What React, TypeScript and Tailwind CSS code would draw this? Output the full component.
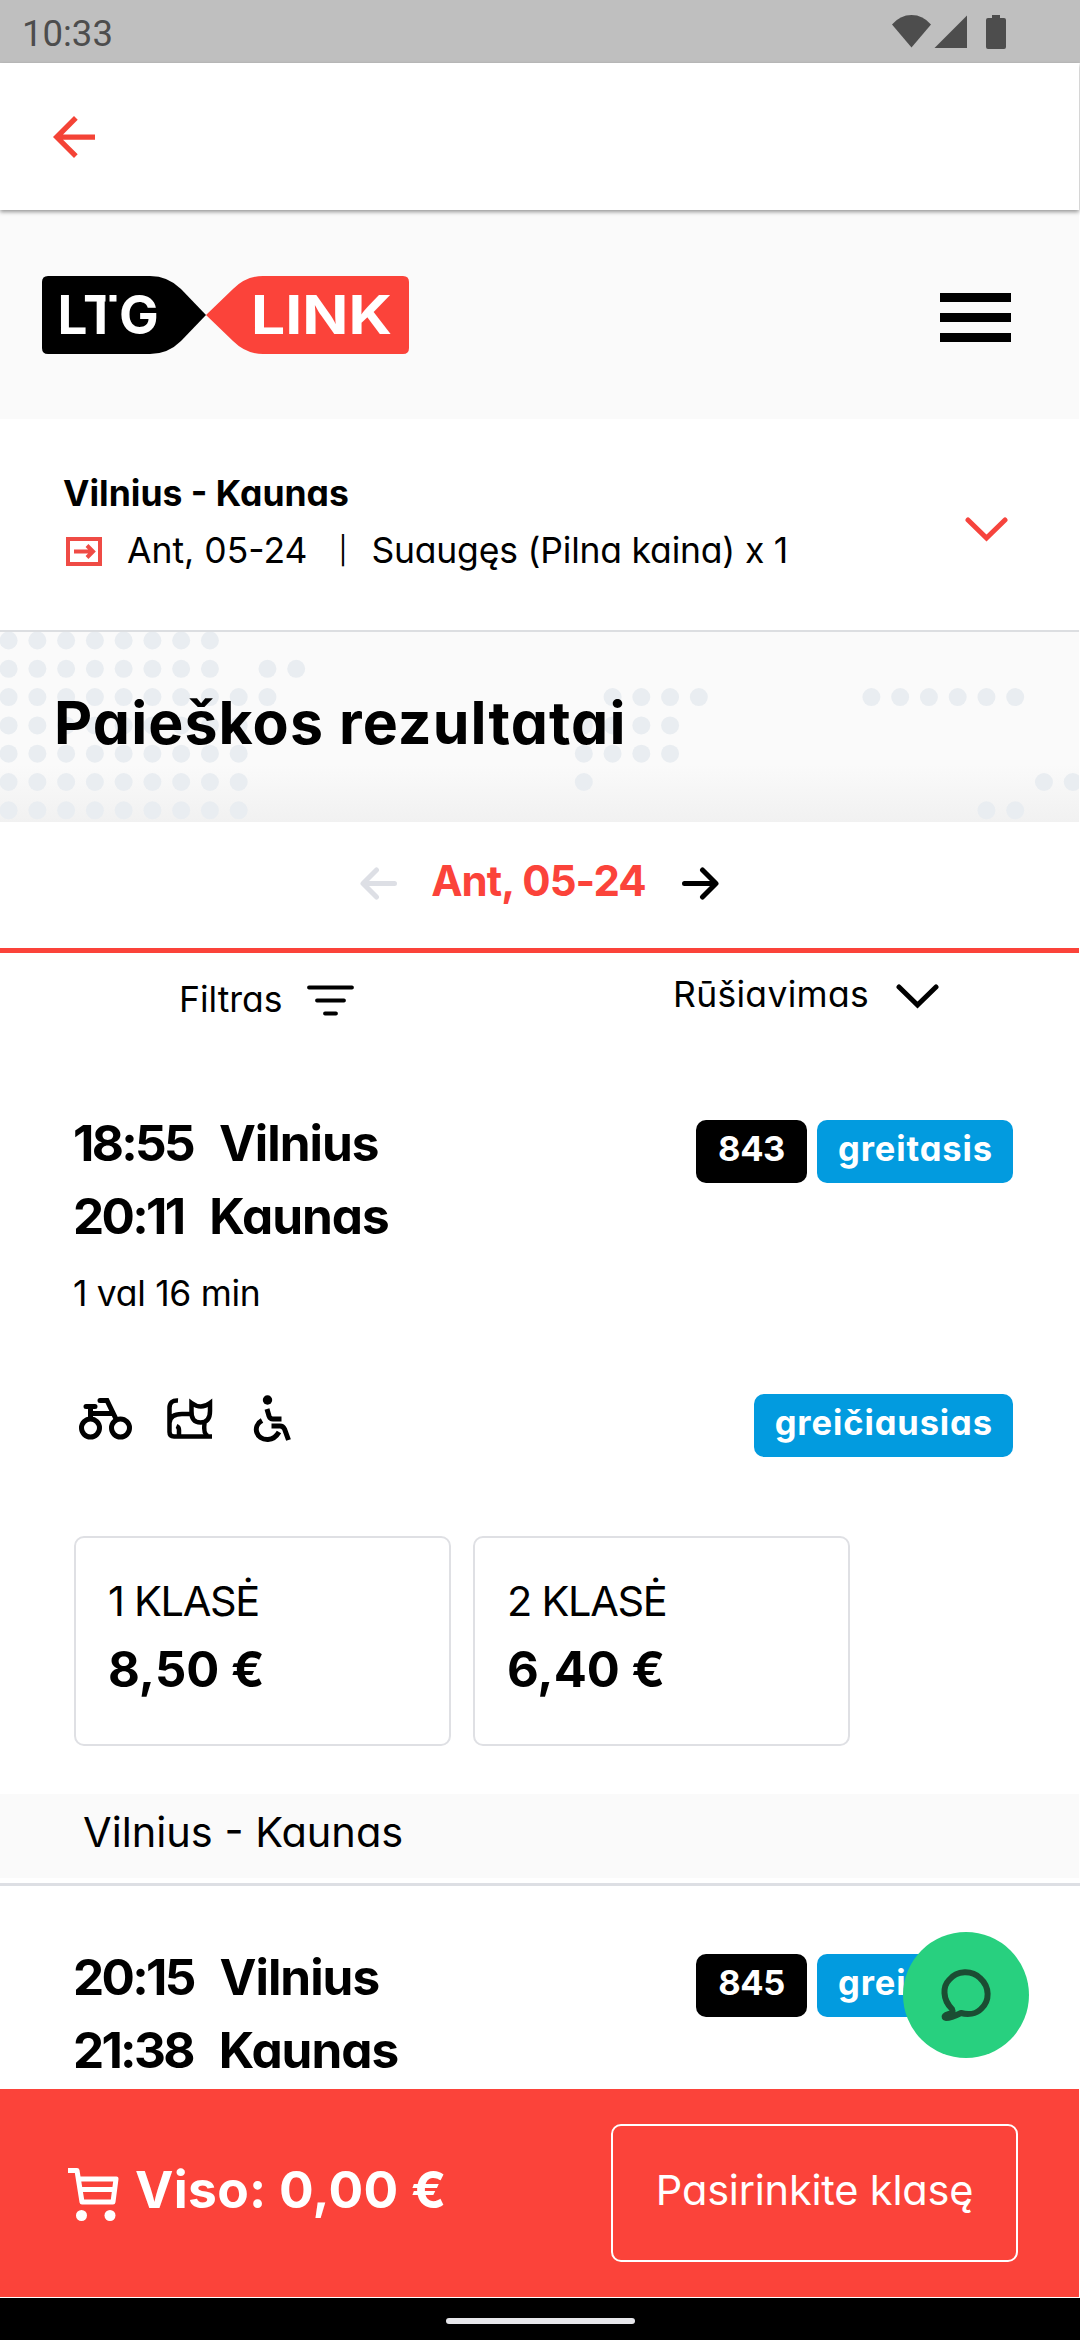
const DOT_ROWS = [
  [[0, 7]],
  [[0, 7], [9, 10]],
  [[0, 9], [21, 24], [30, 35]],
  [[0, 8], [20, 23]],
  [[0, 8], [20, 23]],
  [[0, 8], [20, 20], [36, 37]],
  [[0, 8], [34, 35]],
];

function StatusBar() {
  return (
    <div className="h-[63px] w-[1080px] bg-[#bfbfbf] flex items-center justify-between pl-[22px] pr-[73px]">
      <span className="font-['Roboto'] text-[36.5px] leading-[63px] text-[#4d4d4d] pt-[3px]">10:33</span>
      <svg width="116" height="36" viewBox="891 13 116 36" fill="#4d4d4d">
        <path d="M911.500 46.500L892 23.500Q900 14 911.500 14T931 23.500Z" />
        <path d="M967 14.500V47H934.500Z" />
        <path d="M992 14h8v3h4q2 0 2 2v27q0 2-2 2h-16q-2 0-2-2V19q0-2 2-2h4Z" />
      </svg>
    </div>
  );
}

function Logo() {
  return (
    <svg width="368" height="78" viewBox="42 276 368 78" className="font-['Inter'] font-bold">
      <path d="M48 276H150Q168 276 181 289L206 315L181 341Q168 354 150 354H48Q42 354 42 348V282Q42 276 48 276Z" />
      <path
        d="M403 276H263Q246 276 233 289L206 315L233 341Q246 354 263 354H403Q409 354 409 348V282Q409 276 403 276Z"
        fill="#fb433a"
      />
      <text x="57.500 83 119" y="334" fontSize="53" fill="#fff">LTG</text>
      <rect x="105.500" y="294" width="4" height="10" />
      <text x="251" y="334" fontSize="53" fill="#fff" textLength="141" lengthAdjust="spacingAndGlyphs">LINK</text>
    </svg>
  );
}

function Dots() {
  return (
    <svg className="absolute inset-0" width="1079" height="190" viewBox="0 632 1079 190" fill="#e9edf1">
      {DOT_ROWS.map((row, r) =>
        row.map(([from, to]) =>
          Array.from({ length: to - from + 1 }, (_, i) => (
            <circle key={`${r}-${from + i}`} cx={8.6 + (from + i) * 28.76} cy={640.5 + r * 28.3} r="9" />
          ))
        )
      )}
    </svg>
  );
}

function Chevron({ color }: { color: string }) {
  return (
    <svg width="43" height="25" viewBox="0 0 43 25" fill="none" stroke={color} strokeWidth="5" strokeLinecap="round">
      <path d="M3 3L21.500 21L40 3" />
    </svg>
  );
}

function DayArrow({ color, flip }: { color: string; flip?: boolean }) {
  return (
    <svg
      width="37"
      height="33"
      viewBox="0 0 37 33"
      className={flip ? 'rotate-180 mb-[3px]' : 'mb-[3px]'}
      fill="none"
      stroke={color}
      strokeWidth="5"
      strokeLinecap="round"
      strokeLinejoin="round"
    >
      <path d="M2.500 16.500H33M20.500 3L34 16.500L20.500 30" />
    </svg>
  );
}

function Amenities() {
  return (
    <svg width="214" height="50" viewBox="78 1395 214 50" fill="none" stroke="#000" strokeWidth="5">
      <circle cx="90.500" cy="1429" r="9" />
      <circle cx="120.500" cy="1429" r="9" />
      <path d="M86 1407.500H95M90.500 1407.500V1419M90.500 1414.500H112M100 1401.500H107L116 1420" strokeLinecap="round" />
      <g strokeWidth="4.500">
        <path d="M178 1401.500Q169.500 1401 169.500 1409V1433Q169.500 1437.500 174 1437.500H212M169.500 1424Q170 1415 182 1415H191" />
        <path d="M179 1437V1431Q179 1428 176.500 1427" />
        <path d="M191.500 1404Q201 1411 210 1404V1412Q210 1423.500 200.500 1423.500T191.500 1412Z" />
        <path d="M204.500 1424Q203 1435 208 1437" />
      </g>
      <circle cx="267.500" cy="1401" r="4.700" fill="#000" stroke="none" />
      <path d="M267 1410L269 1417Q270 1420 273 1420H281.500M262 1421.500C252 1427 256 1441 268 1440.500Q275 1440 279 1433M271.500 1427H280Q283 1427 284.500 1430L288.500 1441" />
    </svg>
  );
}

function Badge({ label, dark }: { label: string; dark?: boolean }) {
  return (
    <span
      className={`h-[63px] leading-[57px] rounded-[10px] text-[34.5px] font-bold text-white ${
        dark ? 'bg-black px-[22px] tracking-[-0.4px]' : 'bg-[#029bdf] pl-[21px] pr-[20px] tracking-[0.9px]'
      }`}
    >
      {label}
    </span>
  );
}

interface Leg {
  time: string;
  city: string;
}

function TripTimes({ legs, train }: { legs: Leg[]; train: string }) {
  return (
    <div className="flex justify-between pl-[73px] pr-[67px]">
      <div>
        {legs.map((leg) => (
          <div key={leg.time} className="flex gap-[26px] text-[49.5px] font-bold leading-[73px]">
            <span className="tracking-[-2.7px]">{leg.time}</span>
            <span className="tracking-[-1px]">{leg.city}</span>
          </div>
        ))}
      </div>
      <div className="flex gap-[10px] pt-[13px]">
        <Badge label={train} dark />
        <Badge label="greitasis" />
      </div>
    </div>
  );
}

function ClassCard({ name, price }: { name: string; price: string }) {
  return (
    <div className="w-[377px] h-[210px] border-2 border-[#dfe0e4] rounded-[10px] pl-[32px] pt-[28px]">
      <div className="text-[41.5px] leading-[70px] tracking-[-1.3px]">{name}</div>
      <div className="text-[49px] font-bold leading-[68px]">{price}</div>
    </div>
  );
}

export default function App() {
  return (
    <div className="relative w-[1080px] h-[2340px] overflow-hidden bg-white text-black font-['Inter',sans-serif] [font-feature-settings:'cv11'] whitespace-pre">
      <StatusBar />

      <div className="relative z-10 h-[147px] w-[1079px] bg-white shadow-[0_2px_4px_rgba(0,0,0,0.4)] flex items-center pl-[53px]">
        <svg width="42" height="42" viewBox="4 4 16 16" fill="#f44336">
          <path d="M20 11H7.830l5.590-5.590L12 4l-8 8 8 8 1.410-1.410L7.830 13H20v-2z" />
        </svg>
      </div>

      <header className="h-[209px] w-[1079px] bg-[#fafafa] flex items-center justify-between pl-[42px] pr-[68px]">
        <Logo />
        <div className="flex flex-col gap-[11px] pt-[5px]">
          <div className="w-[71px] h-[9px] bg-black" />
          <div className="w-[71px] h-[9px] bg-black" />
          <div className="w-[71px] h-[9px] bg-black" />
        </div>
      </header>

      <section className="h-[213px] w-[1079px] border-b-2 border-[#dcdee1] flex justify-between pl-[63px] pr-[71px] pt-[47px]">
        <div>
          <div className="text-[35.5px] font-bold leading-[56px]">Vilnius - Kaunas</div>
          <div className="flex items-center text-[35.5px] leading-[58px]">
            <svg className="ml-[3px]" width="36" height="29" viewBox="0 0 36 29" fill="none" stroke="#ef4b45" strokeWidth="4">
              <rect x="2" y="2" width="32" height="25" />
              <path d="M8 14.500H27M21 8.500L27 14.500L21 20.500" />
            </svg>
            <span className="ml-[25px]">Ant, 05-24</span>
            <span className="ml-[31px] text-[27px]">|</span>
            <span className="ml-[24px] tracking-[-0.2px]">Suaugęs (Pilna kaina) x 1</span>
          </div>
        </div>
        <div className="pt-[51px]">
          <Chevron color="#f6443d" />
        </div>
      </section>

      <section className="relative h-[190px] w-[1079px] bg-[linear-gradient(#fafafa_70%,#f1f1f1)] flex items-center pl-[54px] pb-[8px]">
        <Dots />
        <h1 className="relative text-[59px] font-bold tracking-[1.1px]">Paieškos rezultatai</h1>
      </section>

      <section className="h-[131px] w-[1079px] border-b-[5px] border-[#fb433a] flex items-center justify-center">
        <DayArrow color="#dddfe5" flip />
        <span className="ml-[34px] mr-[36px] text-[42px] font-bold leading-[60px] tracking-[-0.9px] text-[#fb433a] pb-[8px]">
          Ant, 05-24
        </span>
        <DayArrow color="#000" />
      </section>

      <section className="h-[154px] flex text-[35.5px]">
        <div className="w-[540px] flex items-start pl-[179px] pt-[17px] leading-[60px]">
          Filtras
          <svg className="ml-[24px] mt-[15px]" width="47" height="31" viewBox="0 0 47 31" stroke="#000" strokeWidth="3.800" strokeLinecap="round">
            <path d="M2 2.500H45M10 15.500H37M18 28.500H29" />
          </svg>
        </div>
        <div className="flex items-start pl-[133px] pt-[12px] leading-[60px]">
          <span className="mr-[27px] tracking-[0.3px]">Rūšiavimas</span>
          <div className="pt-[19px]">
            <Chevron color="#000" />
          </div>
        </div>
      </section>

      <TripTimes
        legs={[
          { time: '18:55', city: 'Vilnius' },
          { time: '20:11', city: 'Kaunas' },
        ]}
        train="843"
      />
      <div className="pl-[73px] pt-[11px] text-[35.5px] leading-[60px] tracking-[-0.3px]">1 val 16 min</div>
      <div className="flex justify-between pl-[78px] pr-[67px] mt-[70px] h-[63px]">
        <Amenities />
        <Badge label="greičiausias" />
      </div>
      <div className="flex gap-[22px] pl-[74px] mt-[79px]">
        <ClassCard name="1 KLASĖ" price="8,50 €" />
        <ClassCard name="2 KLASĖ" price="6,40 €" />
      </div>

      <div className="mt-[48px] h-[84px] w-[1079px] bg-[#fafafa] pl-[83px] text-[41.5px] leading-[77px]">Vilnius - Kaunas</div>
      <div className="mt-[5px] mb-[55px] h-[3px] bg-[#dddfe4]" />
      <TripTimes
        legs={[
          { time: '20:15', city: 'Vilnius' },
          { time: '21:38', city: 'Kaunas' },
        ]}
        train="845"
      />

      <div className="absolute left-[903px] top-[1932px] size-[126px] rounded-full bg-[#28d07f]">
        <svg width="126" height="126" viewBox="903 1932 126 126" fill="none" stroke="#1b4d33" strokeWidth="6" strokeLinejoin="round">
          <path d="M952 2009C942 1999 943 1986 949 1980C957 1970 972 1970 980 1978C990 1987 990 2001 981 2009C976 2014 968 2015 961 2013C957 2015 950 2018 946 2018C943 2017 945 2015 949 2014C953 2013 953 2011 952 2009Z" />
        </svg>
      </div>

      <footer className="absolute left-0 top-[2089px] w-full">
        <div className="h-[208px] w-[1079px] bg-[#fb433a] flex items-center justify-between pl-[68px] pr-[61px] text-white">
          <div className="flex items-center gap-[16px] pb-[6px] text-[51.5px] font-bold tracking-[0.3px]">
            <svg className="mt-[10px]" width="51" height="54" viewBox="68 2168 51 54" fill="none" stroke="#fff" strokeWidth="5" strokeLinejoin="round">
              <path d="M68 2170.500H77L82 2202H113L116 2179H79M80 2189.500H114" />
              <circle cx="81.500" cy="2215.500" r="5.500" fill="#fff" stroke="none" />
              <circle cx="110" cy="2215.500" r="5.500" fill="#fff" stroke="none" />
            </svg>
            Viso: 0,00 €
          </div>
          <div className="w-[407px] h-[138px] border-2 border-white rounded-[10px] text-center text-[41.5px] leading-[129px] tracking-[-0.2px]">
            Pasirinkite klasę
          </div>
        </div>
        <div className="mt-px h-[42px] w-[1080px] bg-black flex justify-center pt-[20px]">
          <div className="w-[189px] h-[6px] rounded-full bg-[#e6e6ea]" />
        </div>
      </footer>
    </div>
  );
}
